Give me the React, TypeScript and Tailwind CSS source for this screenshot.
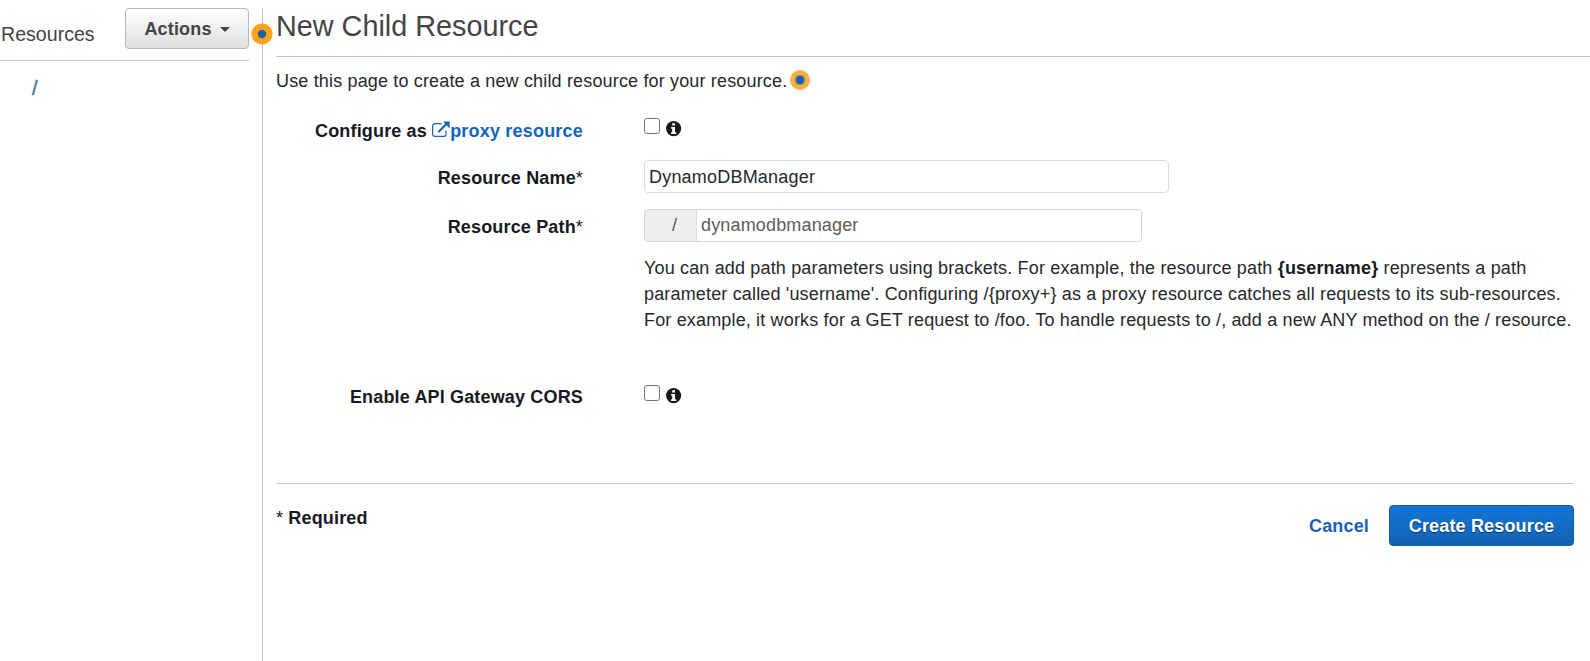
import React from "react";

function InfoIcon() {
  return (
    <svg viewBox="0 0 16 16" className="size-4" aria-label="Info">
      <circle cx="7.6" cy="7.6" r="7.6" fill="#16191f" />
      <path d="M6.2 2.2H9v2.4H6.2zM5.1 5.9H9v5.3h1.2v1.9H5.1v-1.9h1.1V7.8H5.1z" fill="#fff" />
    </svg>
  );
}

function ExternalIcon() {
  return (
    <svg viewBox="0 0 18 17" className="h-[17px] w-[18px]" fill="none" stroke="#1b62b5" strokeWidth="1.2">
      <path d="M9.5 2.6H2.8A2.2 2.2 0 0 0 .6 4.8v8.4a2.2 2.2 0 0 0 2.2 2.2h9a2.2 2.2 0 0 0 2.2-2.2V9.4" />
      <path d="M6.4 11 15 2.6" strokeWidth="2.1" />
      <path d="M11 .6h6.6v6.8z" fill="#1b62b5" stroke="none" />
    </svg>
  );
}

function Hotspot({ soft = false }: { soft?: boolean }) {
  return (
    <svg viewBox="0 0 22 22" className="size-[22px]">
      <circle cx="11" cy="11" r={soft ? "10" : "10.6"} fill={soft ? "#fcaf3c" : "#ffa21c"} />
      {soft && <circle cx="11" cy="11" r="5.6" fill="#b99a5b" />}
      <circle cx="11" cy="11" r="4.2" fill={soft ? "#1763b8" : "#17629f"} />
    </svg>
  );
}

function CheckRow() {
  return (
    <div className="flex">
      <input type="checkbox" className="size-4 appearance-none rounded-[3px] border border-[#767676] bg-white" />
      <span className="ml-1.5 mt-[3px]">
        <InfoIcon />
      </span>
    </div>
  );
}

const label = "w-[307px] shrink-0 text-right font-bold whitespace-nowrap";

export default function App() {
  return (
    <div className="flex h-[661px] w-[1590px] overflow-hidden bg-white font-['Liberation_Sans',Arial,sans-serif] text-[18px] leading-[26px] tracking-[0.16px] text-[#16191f]">
      <aside className="w-[262px] shrink-0 pt-2">
        <div className="flex h-[53px] w-[249px] justify-between border-b border-[#c4c4c4]">
          <h2 className="pt-[13px] pl-px text-[19.6px] tracking-normal text-[#444]">Resources</h2>
          <button className="flex h-[41px] w-[124px] items-center justify-center gap-2 rounded-[4px] border border-[#b8b8b8] bg-linear-to-b from-white to-[#dedede] font-bold text-[#444]">
            Actions
            <svg viewBox="0 0 10 5" className="mt-0.5 h-[5px] w-2.5">
              <path d="M0 0h10L5 5z" fill="#444" />
            </svg>
          </button>
        </div>
        <a className="mt-[14px] block pl-8 text-[20px] text-[#3f6ea5] [-webkit-text-stroke:0.4px_#3f6ea5]">/</a>
      </aside>

      <main className="relative mt-2 w-[1328px] border-l border-[#c4c4c4] pl-[13px]">
        <div className="absolute top-[15px] -left-[12px]">
          <Hotspot />
        </div>
        <h1 className="h-[49px] border-b border-[#c4c4c4] text-[28.8px] leading-[36px] tracking-normal text-[#444]">New Child Resource</h1>
        <p className="mt-[11px] flex h-[26px] items-start text-[#25282c]">
          <span>Use this page to create a new child resource for your resource.</span>
          <span className="mt-px ml-[2px]">
            <Hotspot soft />
          </span>
        </p>

        <div className="flex pt-[24px]">
          <div className={label + " flex justify-end"}>
            Configure as&nbsp;
            <a className="flex text-[#1166bb]">
              <span className="mt-[3px]">
                <ExternalIcon />
              </span>
              <span className="tracking-[0.2px]">proxy resource</span>
            </a>
          </div>
          <div className="ml-[61px]">
            <CheckRow />
          </div>
        </div>

        <div className="mt-4 flex">
          <label className={label + " pt-[5px]"}>
            Resource Name<span className="font-normal">*</span>
          </label>
          <input
            defaultValue="DynamoDBManager"
            className="ml-[61px] h-[33px] w-[525px] rounded-[4px] border border-[#dcdcdc] px-1 pt-0.5 tracking-[0.2px] text-[#25282c]"
          />
        </div>

        <div className="mt-4 flex">
          <label className={label + " pt-[5px]"}>
            Resource Path<span className="font-normal">*</span>
          </label>
          <div className="ml-[61px] flex h-[33px] w-[498px] overflow-hidden rounded-[4px] border border-[#d4d4d4]">
            <span className="flex w-[52px] items-center border-r border-[#dcdcdc] bg-[#eee] pb-0.5 pl-[27px] text-[#555]">/</span>
            <input defaultValue="dynamodbmanager" className="min-w-0 flex-1 px-1 pb-px tracking-[0.16px] text-[#5c5c5c]" />
          </div>
        </div>

        <p className="mt-[13px] ml-[368px] h-[78px] whitespace-nowrap text-[#25282c]">
          You can add path parameters using brackets. For example, the resource path{" "}
          <b className="text-[#16191f]">{"{username}"}</b> represents a path
          <br />
          parameter called 'username'. Configuring /{"{proxy+}"} as a proxy resource catches all requests to its sub-resources.
          <br />
          For example, it works for a GET request to /foo. To handle requests to /, add a new ANY method on the / resource.
        </p>

        <div className="mt-[52px] flex">
          <div className={label}>
            <span className="-mt-px block">Enable API Gateway CORS</span>
          </div>
          <div className="ml-[61px]">
            <CheckRow />
          </div>
        </div>

        <footer className="mt-[73px] flex w-[1298px] items-start border-t border-[#c4c4c4] font-bold">
          <div className="pt-[21px]">
            <span className="font-normal">*</span> Required
          </div>
          <div className="mt-[21px] ml-auto flex items-center">
            <a className="mr-5 text-[#1b5fb8]">Cancel</a>
            <button className="h-[41px] w-[185px] rounded-[4px] border border-[#1059a8] bg-linear-to-b from-[#1475d6] to-[#1363b5] text-white [text-shadow:0_1px_1px_#00000080]">
              Create Resource
            </button>
          </div>
        </footer>
      </main>
    </div>
  );
}
